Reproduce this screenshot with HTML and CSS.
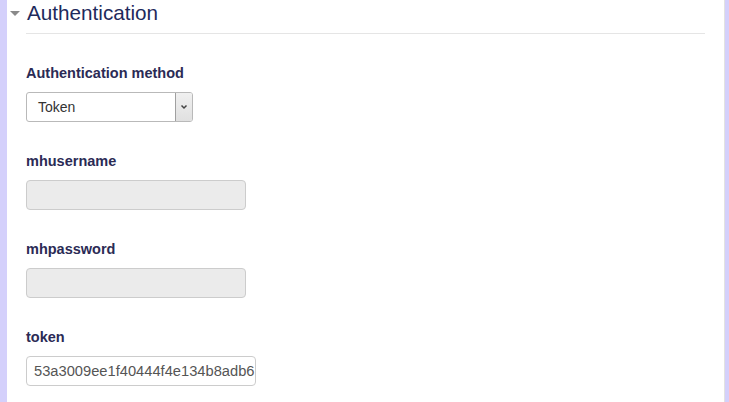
FILE: index.html
```html
<!DOCTYPE html>
<html>
<head>
<meta charset="utf-8">
<link rel="stylesheet" href="styles.css">
</head>
<body>
<div class="page">
  <div class="bar-left"></div>
  <div class="content">
    <div class="legend">
      <span class="caret"></span>
      <span class="legend-text">Authentication</span>
    </div>
    <div class="fields">
      <div class="field">
        <div class="label">Authentication method</div>
        <div class="select">
          <span class="select-text">Token</span>
          <span class="select-btn">
            <svg width="8" height="6" viewBox="0 0 8 6"><path d="M1.5 1.5 L4 4 L6.5 1.5" fill="none" stroke="#444" stroke-width="1.5"/></svg>
          </span>
        </div>
      </div>
      <div class="field">
        <div class="label">mhusername</div>
        <div class="input disabled"></div>
      </div>
      <div class="field">
        <div class="label">mhpassword</div>
        <div class="input disabled"></div>
      </div>
      <div class="field">
        <div class="label">token</div>
        <div class="input token">53a3009ee1f40444f4e134b8adb6</div>
      </div>
    </div>
  </div>
  <div class="bar-right"></div>
</div>
</body>
</html>
```
FILE: styles.css
```css
html, body {
  margin: 0;
  padding: 0;
  background: #fff;
}
body {
  font-family: "Liberation Sans", Arial, sans-serif;
}
.page {
  display: flex;
  height: 402px;
  overflow: hidden;
}
.bar-left {
  width: 7px;
  background: #d4d0fb;
  flex: none;
}
.bar-right {
  width: 4px;
  border-left: 1px solid #e2e2e2;
  background: #d4d0fb;
  flex: none;
}
.content {
  flex: 1;
  padding: 0 19px 0 19px;
}
.legend {
  display: flex;
  align-items: flex-start;
  margin-left: -16px;
}
.caret {
  flex: none;
  margin-top: 11px;
  margin-right: 6px;
  width: 0;
  height: 0;
  border-left: 5px solid transparent;
  border-right: 5px solid transparent;
  border-top: 5px solid #8a8a8a;
}
.legend-text {
  flex: 1;
  font-size: 20.7px;
  line-height: 24px;
  color: #1e2a5c;
  padding-left: 1px;
  padding-top: 1px;
  padding-bottom: 8px;
  border-bottom: 1px solid #e5e5e5;
}
.fields {
  display: flex;
  flex-direction: column;
  gap: 28px;
  padding-top: 28px;
}
.field {
  display: flex;
  flex-direction: column;
  gap: 9px;
  align-items: flex-start;
}
.label {
  font-size: 14.5px;
  line-height: 20px;
  padding-top: 1px;
  font-weight: bold;
  color: #2b2b55;
}
.select {
  box-sizing: border-box;
  width: 167px;
  height: 30px;
  border: 1px solid #b9b9b9;
  border-radius: 3px;
  display: flex;
  align-items: center;
  justify-content: space-between;
  background: #fff;
}
.select-text {
  font-size: 14px;
  color: #333;
  padding-left: 11px;
}
.select-btn {
  box-sizing: border-box;
  width: 17px;
  height: 28px;
  border-left: 1px solid #a0a0a0;
  background: linear-gradient(#f0f0f0, #e0e0e0);
  display: flex;
  align-items: center;
  justify-content: center;
  border-radius: 0 2px 2px 0;
}
.input {
  box-sizing: border-box;
  height: 30px;
  border: 1px solid #cccccc;
  border-radius: 4px;
}
.input.disabled {
  width: 220px;
  background: #ebebeb;
}
.input.token {
  width: 230px;
  background: #fff;
  font-size: 14.7px;
  color: #555;
  padding-left: 7px;
  line-height: 28px;
  white-space: nowrap;
  overflow: hidden;
}
```
